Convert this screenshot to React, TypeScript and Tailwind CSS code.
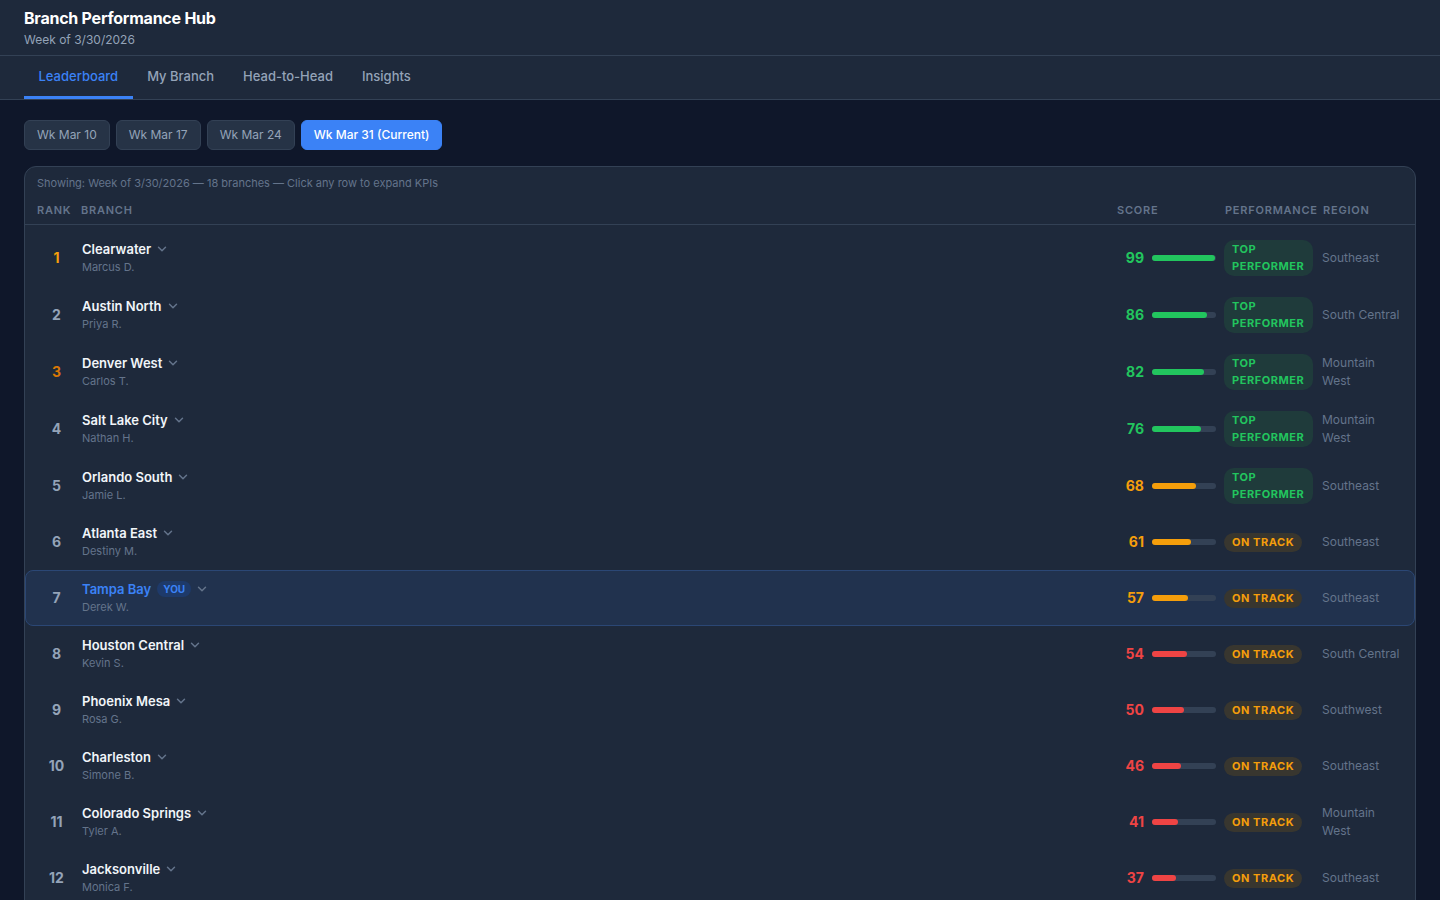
import React from 'react';
import { ChevronDown } from 'lucide-react';

type Branch = {
  rank: number;
  name: string;
  manager: string;
  score: number;
  region: string;
  you?: boolean;
};

const branches: Branch[] = [
  { rank: 1, name: 'Clearwater', manager: 'Marcus D.', score: 99, region: 'Southeast' },
  { rank: 2, name: 'Austin North', manager: 'Priya R.', score: 86, region: 'South Central' },
  { rank: 3, name: 'Denver West', manager: 'Carlos T.', score: 82, region: 'Mountain West' },
  { rank: 4, name: 'Salt Lake City', manager: 'Nathan H.', score: 76, region: 'Mountain West' },
  { rank: 5, name: 'Orlando South', manager: 'Jamie L.', score: 68, region: 'Southeast' },
  { rank: 6, name: 'Atlanta East', manager: 'Destiny M.', score: 61, region: 'Southeast' },
  { rank: 7, name: 'Tampa Bay', manager: 'Derek W.', score: 57, region: 'Southeast', you: true },
  { rank: 8, name: 'Houston Central', manager: 'Kevin S.', score: 54, region: 'South Central' },
  { rank: 9, name: 'Phoenix Mesa', manager: 'Rosa G.', score: 50, region: 'Southwest' },
  { rank: 10, name: 'Charleston', manager: 'Simone B.', score: 46, region: 'Southeast' },
  { rank: 11, name: 'Colorado Springs', manager: 'Tyler A.', score: 41, region: 'Mountain West' },
  { rank: 12, name: 'Jacksonville', manager: 'Monica F.', score: 37, region: 'Southeast' },
  { rank: 13, name: 'San Antonio', manager: 'Luis P.', score: 33, region: 'South Central' },
  { rank: 14, name: 'Tucson', manager: 'Hannah K.', score: 29, region: 'Southwest' },
  { rank: 15, name: 'Boise', manager: 'Owen C.', score: 25, region: 'Mountain West' },
  { rank: 16, name: 'Savannah', manager: 'Grace N.', score: 22, region: 'Southeast' },
  { rank: 17, name: 'Dallas Uptown', manager: 'Ray J.', score: 18, region: 'South Central' },
  { rank: 18, name: 'Albuquerque', manager: 'Nina V.', score: 14, region: 'Southwest' },
];

const weeks = ['Wk Mar 10', 'Wk Mar 17', 'Wk Mar 24', 'Wk Mar 31 (Current)'];
const tabs = ['Leaderboard', 'My Branch', 'Head-to-Head', 'Insights'];

const scoreColor = (s: number) =>
  s >= 70 ? 'text-[#22c55e]' : s >= 55 ? 'text-[#f59e0b]' : 'text-[#ef4444]';
const barColor = (s: number) =>
  s >= 70 ? 'bg-[#22c55e]' : s >= 55 ? 'bg-[#f59e0b]' : 'bg-[#ef4444]';
const rankColor = (r: number) =>
  r === 1 ? 'text-[#f59e0b]' : r === 3 ? 'text-[#d97706]' : 'text-[#94a3b8]';

const Row: React.FC<{ b: Branch }> = ({ b }) => {
  const top = b.rank <= 5;
  return (
    <div
      className={`grid grid-cols-[44px_1fr_108px_98px_80px] items-center px-3 rounded-lg border ${
        top ? 'h-[57px]' : 'h-[56px]'
      } ${b.you ? 'bg-[#21324e] border-[#2b4775]' : 'border-transparent'}`}
    >
      <div className={`w-[37px] text-center text-sm font-bold ${rankColor(b.rank)}`}>{b.rank}</div>
      <div className="flex flex-col">
        <div className="flex h-[18px] items-center">
          <span className={`text-[13px] font-semibold leading-[18px] ${b.you ? 'text-[#3b82f6]' : 'text-[#f1f5f9]'}`}>
            {b.name}
          </span>
          {b.you && (
            <span className="ml-1.5 rounded-full bg-[#1e3a6a] px-1.5 text-[10px] font-bold leading-4 text-[#3b82f6]">
              YOU
            </span>
          )}
          <ChevronDown className="ml-1 h-3.5 w-3.5 text-[#64748b]" strokeWidth={2.5} />
        </div>
        <span className="text-[11px] leading-[18px] text-[#64748b]">{b.manager}</span>
      </div>
      <div className="flex items-center gap-2">
        <span className={`w-7 text-right text-sm font-bold ${scoreColor(b.score)}`}>{b.score}</span>
        <div className="h-1.5 w-16 rounded-full bg-[#334155]">
          <div className={`h-1.5 rounded-full ${barColor(b.score)}`} style={{ width: `${b.score}%` }} />
        </div>
      </div>
      <div className="flex items-center pr-[9px]">
        {top ? (
          <span className="rounded-[10px] bg-[#1f3b3b] px-2 py-px text-[11px] font-bold leading-[17px] tracking-wider text-[#22c55e]">
            TOP PERFORMER
          </span>
        ) : (
          <span className="rounded-[10px] bg-[#38362f] px-2 py-px text-[11px] font-bold leading-[17px] tracking-wider text-[#f59e0b]">
            ON TRACK
          </span>
        )}
      </div>
      <div className="text-xs leading-[18px] text-[#64748b]">{b.region}</div>
    </div>
  );
};

export default function App() {
  return (
    <div className="min-h-screen bg-[#0f172a] font-['Inter',sans-serif] text-[#f1f5f9]">
      <header className="border-b border-[#334155] bg-[#1e293b] px-6 pt-2 pb-[7px]">
        <h1 className="text-base font-bold leading-5 tracking-[-0.015em] text-white">Branch Performance Hub</h1>
        <p className="mt-1 text-xs leading-4 text-[#94a3b8]">Week of 3/30/2026</p>
      </header>

      <nav className="flex border-b border-[#334155] bg-[#1e293b] px-6">
        {tabs.map((t, i) => (
          <button
            key={t}
            className={`border-b-[3px] px-[14.5px] pt-2.5 pb-2.5 text-[13px] font-medium leading-5 ${
              i === 0 ? 'border-[#3b82f6] text-[#3b82f6]' : 'border-transparent text-[#94a3b8]'
            }`}
          >
            {t}
          </button>
        ))}
      </nav>

      <main className="px-6 pt-5">
        <div className="flex gap-1.5">
          {weeks.map((w, i) => (
            <button
              key={w}
              className={`rounded-md border px-3 py-1.5 text-xs leading-4 ${
                i === 3
                  ? 'border-[#3b82f6] bg-[#3b82f6] font-medium text-white'
                  : 'border-[#334155] bg-[#263346] text-[#94a3b8]'
              }`}
            >
              {w}
            </button>
          ))}
        </div>

        <div className="mt-4 rounded-xl border border-[#334155] bg-[#1e293b]">
          <p className="px-3 pt-2 text-[11px] leading-4 text-[#64748b]">
            Showing: Week of 3/30/2026 — 18 branches — Click any row to expand KPIs
          </p>
          <div className="grid grid-cols-[44px_1fr_108px_98px_80px] border-b border-[#334155] px-3 pt-[11px] pb-[6px] text-[11px] font-semibold uppercase leading-4 tracking-[0.07em] text-[#64748b]">
            <span>Rank</span>
            <span>Branch</span>
            <span>Score</span>
            <span>Performance</span>
            <span>Region</span>
          </div>
          <div className="pt-1">
            {branches.map((b) => (
              <Row key={b.rank} b={b} />
            ))}
          </div>
        </div>
      </main>
    </div>
  );
}
